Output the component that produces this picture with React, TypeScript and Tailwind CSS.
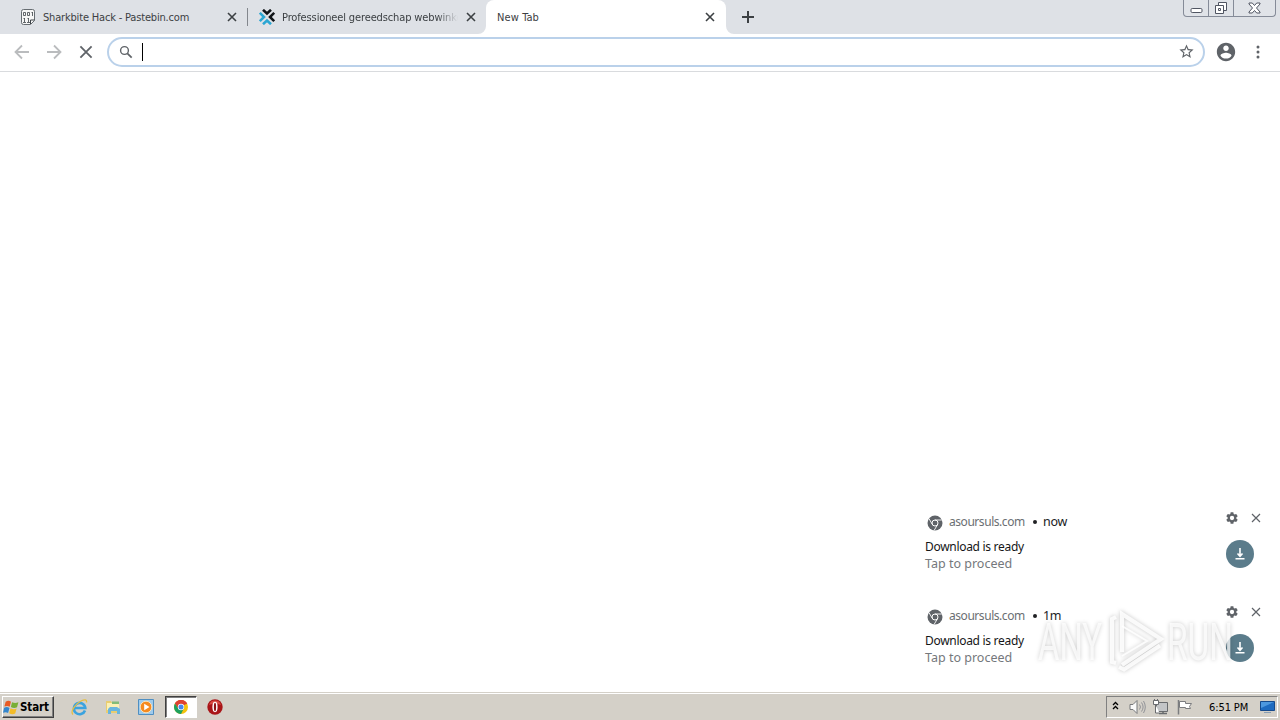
const uiFont = "font-['DejaVu_Sans_Condensed','DejaVu_Sans',sans-serif]";
const toastFont = "font-['Noto_Sans','Open_Sans',sans-serif]";

const CloseIcon = ({ className }: { className?: string }) => (
  <svg viewBox="0 0 10 10" className={className} fill="none" stroke="currentColor">
    <path d="M1 1l8 8M9 1l-8 8" />
  </svg>
);

const PastebinIcon = () => (
  <svg width="16" height="16" viewBox="0 0 16 16" className="shrink-0">
    <path d="M1.500 2.500q0-2 2-2h9q2 0 2 2v9l-4 4h-7q-2 0-2-2z" fill="#f6f6f6" stroke="#666c71" />
    <g fill="none" stroke="#3c4247">
      <path d="M3.500 3.500h2v3h-2zM7.500 3.500h2v3h-2zM12.500 3v4M11.500 3.500h1" strokeWidth=".8" />
      <path d="M4.500 9v4M3.500 9.500h1M3 13.500h3M8.500 9v4M7.500 9.500h1M7 13.500h3" strokeWidth=".8" />
      <path d="M10.500 15v-4h4" />
    </g>
  </svg>
);

const ShopIcon = () => (
  <svg width="16" height="16" viewBox="0 0 16 16" className="shrink-0" fill="none" strokeWidth="2.600">
    <path d="M4 .8L8 4.500l4-3.700" stroke="#101418" />
    <path d="M15.200 3.800L11 8l4.200 4.200" stroke="#101418" />
    <path d="M.8 3.800L5 8L.8 12.200" stroke="#2ba6d3" />
    <path d="M4 15.200L8 11.500l4 3.700" stroke="#2ba6d3" />
  </svg>
);

const WindowControls = () => (
  <div className="flex h-[17px] w-[93px] rounded-b border border-t-0 border-[#858b98] bg-[#e0e3e8]">
    <div className="flex w-[25px] items-center justify-center border-r border-[#858b98]">
      <svg width="13" height="15" viewBox="0 0 13 15">
        <rect x="1" y="7.500" width="11" height="4" rx="1.200" fill="#fff" stroke="#505562" />
      </svg>
    </div>
    <div className="flex w-[25px] items-center justify-center border-r border-[#858b98]">
      <svg width="14" height="14" viewBox="0 0 14 14" fill="#fff" stroke="#505562">
        <path d="M4.500 1.500h8v8h-8z" />
        <path d="M1.500 4.500h8v8h-8zM4.500 7.500h2v2h-2z" />
      </svg>
    </div>
    <div className="flex flex-1 items-center justify-center">
      <svg width="13" height="12" viewBox="0 0 13 12" fill="#fff" stroke="#505562">
        <path d="M1 1h3.300l2.200 2.500L8.700 1H12v1L8.500 6l3.500 4v1H8.700L6.500 8.500 4.300 11H1v-1l3.500-4L1 2z" />
      </svg>
    </div>
  </div>
);

const TabStrip = () => (
  <div className="flex h-[34px] bg-[#dee1e6] text-[11px] text-[#3c4043]">
    <div className="flex w-[247px] items-center pr-[10px] pl-5">
      <PastebinIcon />
      <span className="ml-[7px] flex-1 pt-[2px] whitespace-nowrap tracking-[-0.18px]">Sharkbite Hack - Pastebin.com</span>
      <CloseIcon className="size-[10px] stroke-[1.600]" />
    </div>
    <div className="mt-2 h-[18px] w-px bg-[#83878d]" />
    <div className="flex w-[238px] items-center pr-[10px] pl-[11px]">
      <ShopIcon />
      <span className="ml-[7px] w-[176px] overflow-hidden pt-[2px] whitespace-nowrap tracking-[-0.13px] [mask-image:linear-gradient(to_right,black_88%,transparent)]">
        Professioneel gereedschap webwinkel
      </span>
      <CloseIcon className="ml-auto size-[10px] stroke-[1.600]" />
    </div>
    <div className="w-[240px] bg-[#dee1e6]">
      <div className="relative flex h-[34px] items-center rounded-t-lg bg-white pr-[11px] pl-[11px]">
        <svg width="8" height="8" className="absolute bottom-0 -left-2" fill="#fff">
          <path d="M8 0v8H0a8 8 0 0 0 8-8z" />
        </svg>
        <svg width="8" height="8" className="absolute -right-2 bottom-0" fill="#fff">
          <path d="M0 0v8h8a8 8 0 0 1-8-8z" />
        </svg>
        <span className="flex-1 pt-[2px] tracking-[0.1px]">New Tab</span>
        <CloseIcon className="size-[10px] stroke-[1.600]" />
      </div>
    </div>
    <svg width="12" height="12" viewBox="0 0 12 12" className="mt-[11px] ml-4" stroke="#3c4043" strokeWidth="2">
      <path d="M6 0v12M0 6h12" />
    </svg>
    <div className="mr-1 ml-auto">
      <WindowControls />
    </div>
  </div>
);

const Toolbar = () => (
  <div className="flex h-[38px] items-center border-b border-[#d9dbde] bg-white pb-[2px]">
    <svg width="16" height="16" viewBox="0 0 16 16" className="ml-[14px]" fill="none" stroke="#babcbe" strokeWidth="1.800">
      <path d="M15 8H2M8 1.500L1.500 8L8 14.500" />
    </svg>
    <svg width="16" height="16" viewBox="0 0 16 16" className="ml-4" fill="none" stroke="#babcbe" strokeWidth="1.800">
      <path d="M1 8h13M8 1.500L14.500 8L8 14.500" />
    </svg>
    <CloseIcon className="ml-[17px] size-[14px] stroke-[1.300] text-[#5f6368]" />
    <div className="ml-[14px] flex h-[30px] w-[1098px] items-center rounded-full border-2 border-[#bad1ea] pr-[8px] pl-[10px]">
      <svg width="14" height="14" viewBox="0 0 14 14" fill="none" stroke="#5f6368" strokeWidth="1.400">
        <circle cx="5.500" cy="5.500" r="3.900" />
        <path d="M8.300 8.300L12.700 12.700" strokeWidth="1.700" />
      </svg>
      <div className="ml-[9px] h-[18px] w-px bg-black" />
      <svg width="17" height="17" viewBox="0 0 24 24" className="ml-auto" fill="#5f6368">
        <path d="M22 9.240l-7.190-.62L12 2 9.190 8.630 2 9.240l5.460 4.730L5.820 21 12 17.270 18.180 21l-1.630-7.030L22 9.240zM12 15.400l-3.760 2.270 1-4.280-3.320-2.880 4.380-.38L12 6.100l1.710 4.040 4.380.38-3.320 2.880 1 4.280L12 15.400z" />
      </svg>
    </div>
    <svg width="22" height="22" viewBox="0 0 24 24" className="ml-[10px]" fill="#5f6368">
      <path d="M12 2C6.480 2 2 6.480 2 12s4.480 10 10 10 10-4.480 10-10S17.520 2 12 2zm0 3c1.660 0 3 1.340 3 3s-1.340 3-3 3-3-1.340-3-3 1.340-3 3-3zm0 14.200c-2.500 0-4.710-1.280-6-3.220.03-1.990 4-3.080 6-3.080 1.990 0 5.970 1.090 6 3.080-1.290 1.940-3.500 3.220-6 3.220z" />
    </svg>
    <svg width="4" height="14" viewBox="0 0 4 14" className="ml-[19px]" fill="#5f6368">
      <circle cx="2" cy="2" r="1.500" />
      <circle cx="2" cy="7" r="1.500" />
      <circle cx="2" cy="12" r="1.500" />
    </svg>
  </div>
);

const notifications = [
  { site: "asoursuls.com", time: "now", title: "Download is ready", body: "Tap to proceed" },
  { site: "asoursuls.com", time: "1m", title: "Download is ready", body: "Tap to proceed" },
];

const Notification = ({ site, time, title, body }: (typeof notifications)[number]) => (
  <div className="flex h-[84px] w-[355px] justify-between pt-[3px]">
    <div>
      <div className="flex h-[18px] items-center text-[12.500px]">
        <svg width="16" height="16" viewBox="0 0 16 16" className="mt-1 ml-[2px]">
          <circle cx="8" cy="8" r="7.500" fill="#5f6368" />
          <circle cx="8" cy="8" r="3" fill="none" stroke="#fff" strokeWidth="1" />
          <path d="M8 5h6.800M5.400 9.500L2 3.700M10.600 9.500L7.200 15.300" stroke="#fff" strokeWidth=".9" />
        </svg>
        <span className="ml-[6px] w-[76px] pt-[2px] text-[12px] whitespace-nowrap tracking-[-0.45px] text-[#6b6f73]">{site}</span>
        <span className="mt-[2px] ml-[8px] size-1 rounded-full bg-[#202124]" />
        <span className="ml-[6px] pt-[2px] tracking-[-0.3px] text-[#202124]">{time}</span>
      </div>
      <div className="mt-2 text-[12.500px] leading-[17px]">
        <p className="text-[12px] tracking-[-0.3px] text-[#151617]">{title}</p>
        <p className="text-[#75787c]">{body}</p>
      </div>
    </div>
    <div className="w-[55px] text-[#5f6368]">
      <div className="flex items-center">
        <svg width="12" height="12" viewBox="2 2 20 20" className="ml-[1px]" fill="currentColor">
          <path d="M19.140 12.940c.04-.3.06-.61.06-.94s-.02-.64-.07-.94l2.030-1.580a.49.49 0 0 0 .12-.61l-1.920-3.320a.49.49 0 0 0-.59-.22l-2.390.96a7 7 0 0 0-1.620-.94l-.36-2.540a.48.48 0 0 0-.48-.41h-3.840a.47.47 0 0 0-.47.41l-.36 2.540c-.59.24-1.130.57-1.620.94l-2.390-.96a.48.48 0 0 0-.59.22L2.740 8.870a.47.47 0 0 0 .12.61l2.030 1.580a6 6 0 0 0-.02 1.880l-2.030 1.580a.49.49 0 0 0-.12.61l1.920 3.320c.12.22.37.29.59.22l2.390-.96c.5.38 1.030.7 1.620.94l.36 2.540c.05.24.24.41.48.41h3.840c.24 0 .44-.17.47-.41l.36-2.540c.59-.24 1.130-.56 1.620-.94l2.390.96c.22.08.47 0 .59-.22l1.920-3.320a.47.47 0 0 0-.12-.61zM12 15.600a3.600 3.600 0 1 1 0-7.200 3.600 3.600 0 0 1 0 7.200z" />
        </svg>
        <CloseIcon className="ml-[13px] size-[10px] stroke-[1.200]" />
      </div>
      <svg width="28" height="28" viewBox="0 0 28 28" className="mt-4 ml-[1px]">
        <circle cx="14" cy="14" r="14" fill="#5b7c8b" />
        <path d="M14 8v8M11.500 13.500L14 16.300l2.500-2.800M9.500 18.800h9" fill="none" stroke="#fff" strokeWidth="1.600" />
      </svg>
    </div>
  </div>
);

const Watermark = () => (
  <svg width="210" height="76" viewBox="1032 602 210 76" className="pointer-events-none absolute top-[602px] left-[1032px] drop-shadow-[0_0_2px_#0004]">
    <g fill="#fff" fillOpacity=".75" fontFamily="Roboto, sans-serif" fontSize="52">
      <text x="1038" y="660" textLength="64" lengthAdjust="spacingAndGlyphs">ANY</text>
      <text x="1167" y="660" textLength="66" lengthAdjust="spacingAndGlyphs">RUN</text>
    </g>
    <g fill="none" stroke="#fff" strokeOpacity=".85" strokeWidth="4">
      <path d="M1116 617l-4 2v43l4 1" />
      <path d="M1122 652v-38l39 25-39 26" />
      <path d="M1122 626l25 15-25 15" strokeWidth="2" />
      <path d="M1119 667l5 2.500 36-24" />
    </g>
  </svg>
);

const StartButton = () => (
  <div className="flex h-[22px] w-[52px] items-center border border-white border-r-[#404040] border-b-[#404040] bg-[#d4d0c8] shadow-[inset_-1px_-1px_0_#808080]">
    <svg width="17" height="17" viewBox="0 0 16 16" className="shrink-0">
      <path d="M2.500 2.500c2-1.200 3.500-1 5 0L6.300 7.200c-1.600-.9-3-1-5-.1z" fill="#e85b25" />
      <path d="M8.500 3c2 1 3.700 1 6 .1l-1.300 4.700c-2 .9-3.800.8-5.800-.3z" fill="#78af35" />
      <path d="M1.100 8.200c1.900-.9 3.300-.8 5 .2l-1.300 4.800c-1.500-1-3-1.100-4.800-.2z" fill="#3486cd" />
      <path d="M7.100 8.700c2 1 3.800 1.100 5.700.3l-1.300 4.700c-2 1-3.800.8-5.700-.3z" fill="#f3bc29" />
    </svg>
    <span className="pt-px text-[11.500px] font-bold tracking-[-0.1px] text-black">Start</span>
  </div>
);

const IeIcon = () => (
  <svg width="17" height="17" viewBox="0 0 17 17" fill="none">
    <path d="M14 11.500A5.700 5.700 0 1 1 14.300 9H4" stroke="#3ba3df" strokeWidth="2.600" />
    <path d="M2 15.500C-1 13 4 5 10 2c4-2 6-1.500 5.500 1.500" stroke="#e5bd43" strokeWidth="1.300" />
  </svg>
);

const FolderIcon = () => (
  <svg width="16" height="16" viewBox="0 0 16 16">
    <path d="M1 2h5l1 2h7v10H1z" fill="#e9cd70" />
    <path d="M2 4h12v7H2z" fill="#fbf0b5" />
    <path d="M7 2.500h7V5H7z" fill="#83bb78" />
    <path d="M3 15v-5l2-2h7l3 2v5h-3v-3H6v3z" fill="#69b5de" />
  </svg>
);

const PlayerIcon = () => (
  <svg width="16" height="16" viewBox="0 0 16 16">
    <path d="M.5 .5h15v15H.5z" fill="#9fcbec" stroke="#4f8fc2" />
    <circle cx="8" cy="8" r="5.800" fill="#f58a20" stroke="#fbe1b6" />
    <path d="M6.200 4.800v6.400L11.500 8z" fill="#fff" />
  </svg>
);

const ChromeIcon = () => (
  <svg width="14" height="14" viewBox="0 0 14 14">
    <circle cx="7" cy="7" r="7" fill="#f4c20d" />
    <path d="M7 7L.94 3.500a7 7 0 0 1 12.120 0z" fill="#de4232" />
    <path d="M7 3.800h6.230A7 7 0 0 0 .94 3.500L4.200 8.600z" fill="#de4232" />
    <path d="M.94 3.500A7 7 0 0 0 7 14l2.800-5.400H4.200z" fill="#1da15f" />
    <circle cx="7" cy="7" r="3.200" fill="#fff" />
    <circle cx="7" cy="7" r="2.500" fill="#4587ed" />
  </svg>
);

const OperaIcon = () => (
  <svg width="16" height="16" viewBox="0 0 16 16">
    <circle cx="8" cy="8" r="7.700" fill="#a91518" />
    <path d="M2 6a6.300 6.300 0 0 1 12 0C10 4 6 4 2 6z" fill="#d94b43" />
    <ellipse cx="8" cy="8" rx="2.600" ry="5.200" fill="#fff" />
    <ellipse cx="8" cy="8" rx="1.100" ry="4.200" fill="#8c1315" />
  </svg>
);

const Tray = () => (
  <div className="mr-[2px] ml-auto flex h-[22px] w-[172px] items-center border border-[#808080] border-r-white border-b-white">
    <svg width="7" height="9" viewBox="0 0 7 9" className="mb-1 ml-[5px]" fill="none" stroke="#000" strokeWidth="1.300">
      <path d="M1 4l2.500-2.500L6 4M1 8l2.500-2.500L6 8" />
    </svg>
    <svg width="17" height="16" viewBox="0 0 17 16" className="ml-[10px]" fill="none" stroke="#77787b">
      <path d="M1 5.500h3l4-4v13l-4-4H1z" fill="#f9f9f9" />
      <path d="M10.500 5.500q2 2.500 0 5M12.500 3.500q3.200 4.500 0 9M14.500 2q3.600 6 0 12" stroke="#929398" />
    </svg>
    <svg width="17" height="16" viewBox="0 0 17 16" className="ml-[6px]" stroke="#696b6e">
      <path d="M4.500 3.500h11v9h-11z" fill="#c3c5c7" />
      <path d="M7 14.500h8M11 12.500v2" strokeWidth="1.500" />
      <path d="M1.500 1.500h5v4h-5zM3.500 5.500v8.500h4M2.500 0v2M5.500 0v2" fill="#fff" />
    </svg>
    <svg width="17" height="16" viewBox="0 0 17 16" className="ml-[7px]" stroke="#7b7c7f">
      <path d="M2.500 1v14.500" strokeWidth="1.500" />
      <path d="M3.500 2.500h6v2h6l-2 3 1 2h-5v-1h-6z" fill="#fff" />
    </svg>
    <span className="ml-[16px] pt-[2px] text-[11px] whitespace-nowrap tracking-[-0.1px] text-black">6:51 PM</span>
    <svg width="15" height="14" viewBox="0 0 15 14" className="mr-[2px] ml-auto">
      <path d="M.5 1.500h14v9H.5z" fill="#1e6bc0" stroke="#164a8c" />
      <path d="M1 2h13L1 8z" fill="#4d98df" />
      <path d="M4 12h7v1H4z" fill="#879db3" />
    </svg>
  </div>
);

const Taskbar = () => (
  <div className="flex h-7 items-start border-t border-[#d4d0c8] bg-[#d4d0c8] pl-[2px] shadow-[inset_0_1px_0_#fff]">
    <div className="flex w-full items-center pt-[3px]">
      <StartButton />
      <div className="ml-[17px] flex items-center gap-[17px]">
        <IeIcon />
        <FolderIcon />
        <PlayerIcon />
      </div>
      <div className="ml-[11px] flex h-[22px] w-[32px] items-center justify-center border border-[#404040] border-r-white border-b-white bg-white shadow-[inset_1px_1px_0_#808080]">
        <ChromeIcon />
      </div>
      <div className="ml-[10px]">
        <OperaIcon />
      </div>
      <Tray />
    </div>
  </div>
);

export default function App() {
  return (
    <div className={`relative flex h-[720px] w-[1280px] flex-col overflow-hidden bg-white ${uiFont}`}>
      <TabStrip />
      <Toolbar />
      <main className={`flex flex-1 flex-col items-end justify-end gap-[10px] pb-[5px] ${toastFont}`}>
        {notifications.map((item) => (
          <Notification key={item.time} {...item} />
        ))}
      </main>
      <Taskbar />
      <Watermark />
    </div>
  );
}
